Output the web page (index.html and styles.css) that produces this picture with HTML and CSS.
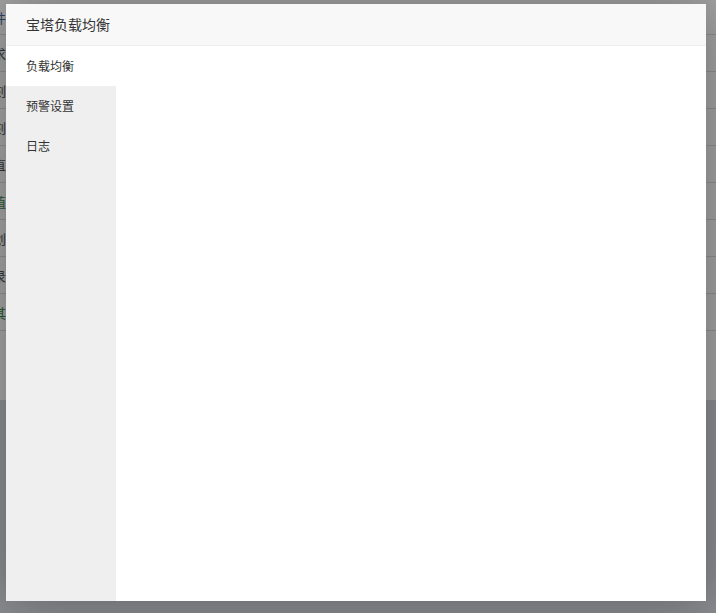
FILE: index.html
```html
<!DOCTYPE html>
<html lang="zh-CN">
<head>
    <meta charset="UTF-8">
    <meta name="viewport" content="width=device-width, initial-scale=1.0">
    <title>宝塔负载均衡</title>
    <link rel="stylesheet" href="styles.css">
</head>
<body>
    <div class="page">
        <div class="table">
            <div class="row"><span class="cell blue">件</span></div>
            <div class="row"><span class="cell">求</span></div>
            <div class="row"><span class="cell">刻</span></div>
            <div class="row"><span class="cell">刻</span></div>
            <div class="row"><span class="cell">直</span></div>
            <div class="row"><span class="cell green">值</span></div>
            <div class="row"><span class="cell">划</span></div>
            <div class="row"><span class="cell">录</span></div>
            <div class="row"><span class="cell green">其</span></div>
        </div>
    </div>

    <div class="shade"></div>

    <div class="layer">
        <div class="layer-title">宝塔负载均衡</div>
        <div class="layer-content">
            <ul class="tab-menu">
                <li class="active">负载均衡</li>
                <li>预警设置</li>
                <li>日志</li>
            </ul>
            <div class="tab-body"></div>
        </div>
    </div>
</body>
</html>
```

FILE: styles.css
```css
* {
    box-sizing: border-box;
}

body {
    margin: 0;
    height: 613px;
    overflow: hidden;
    font-family: "Microsoft YaHei", "Noto Sans CJK SC", "Liberation Sans", sans-serif;
    background-color: #dadce2;
}

.page {
    height: 400px;
    background-color: #fff;
}

.row {
    height: 37px;
    border-bottom: 1px solid #dedede;
    display: flex;
    align-items: center;
    font-size: 13px;
    color: #555;
}

.row:first-child {
    height: 35px;
}

.cell {
    margin-left: -7px;
}

.cell.green {
    color: #3c8c50;
}

.cell.blue {
    color: #4a6a9a;
}

.shade {
    position: fixed;
    top: 0;
    left: 0;
    right: 0;
    bottom: 0;
    background-color: rgba(0, 0, 0, 0.37);
}

.layer {
    position: fixed;
    top: 4px;
    left: 6px;
    width: 700px;
    height: 597px;
    display: flex;
    flex-direction: column;
    background-color: #fff;
    box-shadow: 1px 1px 50px rgba(0, 0, 0, 0.3);
}

.layer-title {
    height: 42px;
    line-height: 41px;
    padding: 0 80px 0 20px;
    border-bottom: 1px solid #eee;
    background-color: #f8f8f8;
    font-size: 14px;
    color: #333;
}

.layer-content {
    flex: 1;
    display: flex;
}

.tab-menu {
    width: 110px;
    margin: 0;
    padding: 0;
    list-style: none;
    background-color: #efefef;
}

.tab-menu li {
    height: 40px;
    line-height: 40px;
    padding-left: 20px;
    font-size: 12px;
    color: #333;
    cursor: pointer;
}

.tab-menu li.active {
    background-color: #fff;
}

.tab-body {
    flex: 1;
    background-color: #fff;
}
```
